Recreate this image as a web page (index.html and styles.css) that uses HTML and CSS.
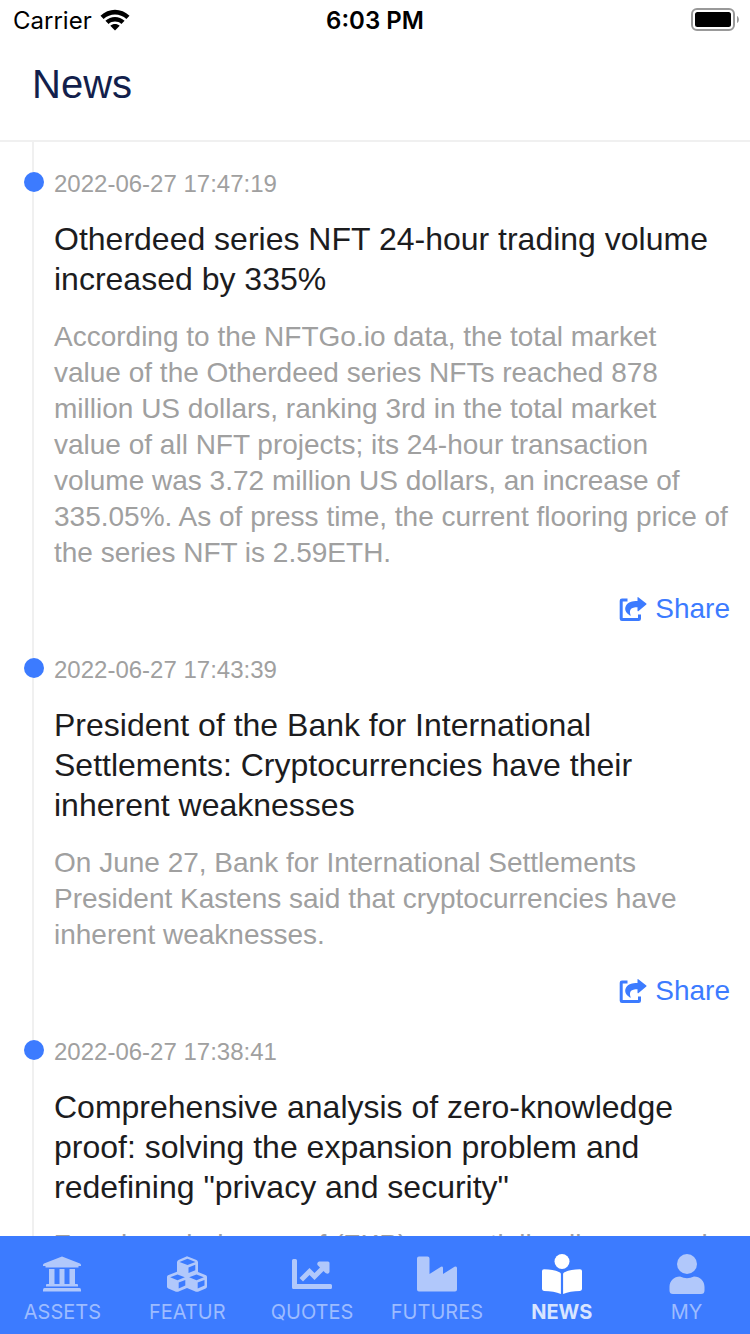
FILE: index.html
```html
<!DOCTYPE html>
<html lang="en">
<head>
<meta charset="utf-8">
<meta name="viewport" content="width=device-width, initial-scale=1">
<title>News</title>
<link rel="stylesheet" href="styles.css">
</head>
<body>
<div class="app">
  <div class="status">
    <div class="carrier">
      <span>Carrier</span>
      <svg class="wifi" viewBox="0 0 30 22" aria-hidden="true">
        <path d="M0.5 6.8C8.500-1.300 21.500-1.300 29.500 6.800L26.400 10C20.200 4 9.800 4 3.600 10Z"/>
        <path d="M5.400 11.800C10.800 6.600 19.200 6.600 24.600 11.800L21.400 15C17.900 11.800 12.100 11.800 8.600 15Z"/>
        <path d="M10.300 16.800C13 14.400 17 14.400 19.700 16.800L15 21.600Z"/>
      </svg>
    </div>
    <time class="clock">6:03 PM</time>
    <svg class="battery" viewBox="0 0 48 24" aria-hidden="true">
      <rect x="1" y="1" width="42" height="21" rx="5" fill="none" stroke="#999" stroke-width="2"/>
      <rect x="4" y="4" width="36" height="15" rx="2.500"/>
      <path d="M46 8C48.500 9 48.500 14 46 15Z" fill="#999"/>
    </svg>
  </div>
  <header class="header"><h1>News</h1></header>
  <main class="feed">
    <div class="timeline">
      <article class="item">
        <time class="date">2022-06-27 17:47:19</time>
        <h2>Otherdeed series NFT 24-hour trading volume increased by 335%</h2>
        <p>According to the NFTGo.io data, the total market value of the Otherdeed series NFTs reached 878 million US dollars, ranking 3rd in the total market value of all NFT projects; its 24-hour transaction volume was 3.72 million US dollars, an increase of 335.05%. As of press time, the current flooring price of the series NFT is 2.59ETH.</p>
        <button class="share" type="button"><svg viewBox="0 0 28 26" aria-hidden="true"><use href="#share"/></svg>Share</button>
      </article>
      <article class="item">
        <time class="date">2022-06-27 17:43:39</time>
        <h2>President of the Bank for International Settlements: Cryptocurrencies have their inherent weaknesses</h2>
        <p>On June 27, Bank for International Settlements President Kastens said that cryptocurrencies have inherent weaknesses.</p>
        <button class="share" type="button"><svg viewBox="0 0 28 26" aria-hidden="true"><use href="#share"/></svg>Share</button>
      </article>
      <article class="item">
        <time class="date">2022-06-27 17:38:41</time>
        <h2>Comprehensive analysis of zero-knowledge proof: solving the expansion problem and redefining "privacy and security"</h2>
        <p>Zero-knowledge proof (ZKP) essentially allows people</p>
      </article>
    </div>
  </main>
  <nav class="tabs" aria-label="Main">
    <a class="tab" href="#assets">
      <svg viewBox="0 0 40 40" aria-hidden="true"><path d="M20 2.500L38 9.500Q39 10 39 11V12H36.500V13.500H3.500V12H1V11Q1 10 2 9.500ZM7 15H12.500V30H17.500V15H22.500V30H27.500V15H33V30H35Q36 30 36 31V32.500H4V31Q4 30 5 30H7ZM2.500 34H37.500Q39 34 39 36V37.500H1V36Q1 34 2.500 34Z"/></svg>
      <span>ASSETS</span>
    </a>
    <a class="tab" href="#featur">
      <svg viewBox="0 0 40 40" aria-hidden="true">
        <path fill-rule="evenodd" d="M20 2.200L29.500 6Q31 6.700 31 8.200V18L39 21.200Q40 21.800 40 23V32.500Q40 33.900 38.700 34.500L31 37.700Q30 38 29 37.700L20 34L11 37.700Q10 38 9 37.700L1.300 34.500Q0 33.900 0 32.500V23Q0 21.800 1 21.200L10 17.700V8.200Q10 6.700 11.500 6ZM20.500 4.700L12.500 7.900L20.500 11L28.500 7.900ZM21.500 13.500V19L28.300 16.200V10.800ZM10.500 20.500L3.200 23.300L10.500 26.200L17.800 23.300ZM11.700 28.600V34.400L18.300 31.600V25.900ZM29.500 20.500L22.200 23.300L29.500 26.200L36.800 23.300ZM30.700 28.600V34.400L37.500 31.600V25.900Z"/>
      </svg>
      <span>FEATUR</span>
    </a>
    <a class="tab" href="#quotes">
      <svg viewBox="0 0 40 40" aria-hidden="true"><path d="M1.500 5H3.500Q5 5 5 6.500V30H38.500Q40 30 40 31.500V33.500Q40 35 38.500 35H1.500Q0 35 0 33.500V6.500Q0 5 1.500 5ZM27 7.500H36Q37.500 7.500 37.500 9V18Q36.500 21 33.500 19L31.500 17L22.500 26L17.500 21L11 27.500L7.500 24L17.500 14L22.500 19L28 13.500L25.500 11Q24.500 8.500 27 7.500Z"/></svg>
      <span>QUOTES</span>
    </a>
    <a class="tab" href="#futures">
      <svg viewBox="0 0 40 40" aria-hidden="true"><path d="M2 2.500H10.500Q12.500 2.500 12.500 4.500V20L24 12.800Q26 11.800 26 14V20L37.500 12.800Q40 11.800 40 14V35.500Q40 37.500 38 37.500H2Q0 37.500 0 35.500V4.500Q0 2.500 2 2.500Z"/></svg>
      <span>FUTURES</span>
    </a>
    <a class="tab active" href="#news" aria-current="page">
      <svg viewBox="0 0 40 40" aria-hidden="true"><circle cx="20" cy="7.500" r="7.500"/><path d="M2 15.200Q12 15.300 18 18.500Q18.900 19 18.900 20V40Q12 37 2 36.900Q0 36.700 0 35V17Q0 15.200 2 15.200ZM38 15.200Q28 15.300 22 18.500Q21.100 19 21.100 20V40Q28 37 38 36.900Q40 36.700 40 35V17Q40 15.200 38 15.200Z"/></svg>
      <span>NEWS</span>
    </a>
    <a class="tab" href="#my">
      <svg viewBox="0 0 40 40" aria-hidden="true"><circle cx="20" cy="10" r="10"/><path d="M13 22.500Q20 26 27 22.500C33 22.500 37.500 27 37.500 33V36.500Q37.500 40 34 40H6Q2.500 40 2.500 36.500V33C2.500 27 7 22.500 13 22.500Z"/></svg>
      <span>MY</span>
    </a>
  </nav>
</div>
<svg class="defs" aria-hidden="true">
  <symbol id="share" viewBox="0 0 28 26">
    <path d="M8.500 4H3Q2.200 4 2.200 4.800V22.700Q2.200 23.500 3 23.500H19.700Q20.500 23.500 20.500 22.700V18.500" fill="none" stroke="currentColor" stroke-width="3" stroke-linejoin="round"/>
    <path d="M19.300 1.200L27.300 7.500Q27.900 8 27.300 8.600L19.300 15.200Q18.500 15.700 18.500 14.600V11.300C12 11.300 9.800 13.500 11.600 19.300Q11.700 20.200 10.900 19.600C6.500 16.500 5 13 7.200 9.300C9.200 5.800 13 5 18.500 4.900V1.700Q18.500 0.700 19.300 1.200Z" fill="currentColor"/>
  </symbol>
</svg>
</body>
</html>
```
FILE: styles.css
```css
* {
  box-sizing: border-box;
}

body {
  margin: 0;
  background: #fff;
  font-family: "Liberation Sans", Arial, sans-serif;
}

h1, h2, p {
  margin: 0;
  font-weight: 400;
}

.defs {
  display: none;
}

.app {
  display: flex;
  flex-direction: column;
  height: 100vh;
}

.status {
  display: grid;
  grid-template-columns: 1fr auto 1fr;
  align-items: center;
  height: 40px;
  padding: 0 11px;
  font-family: Inter, sans-serif;
  font-size: 24px;
  color: #000;
}

.carrier {
  display: flex;
  align-items: center;
  gap: 8px;
  padding-left: 2px;
}

.wifi {
  width: 30px;
  height: 22px;
}

.clock {
  font-weight: 600;
}

.battery {
  width: 48px;
  height: 24px;
  justify-self: end;
}

.header {
  padding: 18px 32px 30px;
  border-bottom: 2px solid #f0f0f0;
}

.header h1 {
  font-size: 40px;
  line-height: 52px;
  color: #131f4c;
}

.feed {
  flex: 1;
  min-height: 0;
  overflow: hidden;
}

.timeline {
  margin-left: 32px;
  padding: 28px 20px 0;
  border-left: 2px solid #f0f0f0;
}

.item {
  position: relative;
  display: flex;
  flex-direction: column;
  padding-bottom: 28px;
}

.item::before {
  content: "";
  position: absolute;
  top: 2px;
  left: -30px;
  width: 20px;
  height: 20px;
  border-radius: 50%;
  background: #3c7bff;
}

.date {
  font-size: 24px;
  line-height: 28px;
  color: #a0a0a0;
}

.item h2 {
  margin-top: 21px;
  font-size: 32px;
  line-height: 40px;
  color: #1c1c1e;
}

.item p {
  margin: 20px 0 19px;
  font-size: 28px;
  line-height: 36px;
  color: #a0a0a0;
}

.share {
  display: flex;
  align-items: center;
  align-self: flex-end;
  gap: 8px;
  padding: 0;
  border: 0;
  background: none;
  font: inherit;
  font-size: 28px;
  line-height: 38px;
  color: #3c7bff;
}

.share svg {
  width: 28px;
  height: 26px;
}

.tabs {
  display: grid;
  grid-template-columns: repeat(6, 1fr);
  padding-right: 1px;
  background: #3c7bff;
}

.tab {
  display: flex;
  flex-direction: column;
  align-items: center;
  gap: 7px;
  padding: 18px 0 11px;
  font-family: Inter, sans-serif;
  font-size: 20px;
  font-weight: 400;
  line-height: 22px;
  text-decoration: none;
  color: #9dbcff;
}

.tab svg {
  width: 40px;
  height: 40px;
  fill: #b1c8fb;
}

.active {
  font-weight: 700;
  color: #d8e5ff;
}

.active svg {
  fill: #fff;
}
```
